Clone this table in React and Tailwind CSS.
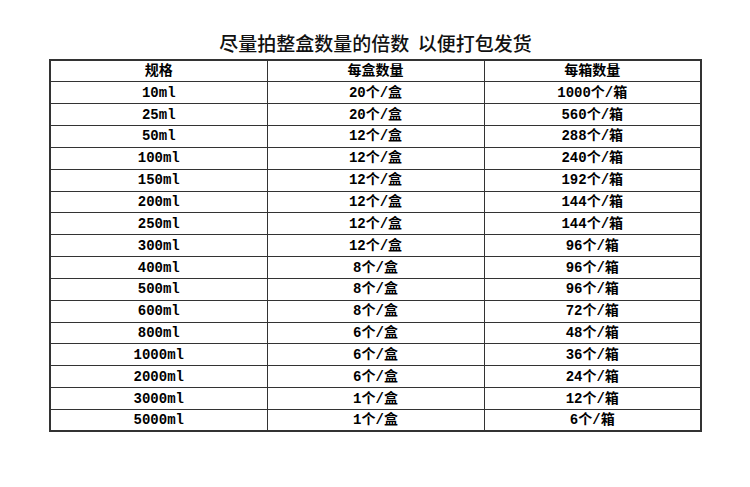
import React from 'react';

const rows = [
  ['10ml', '20个/盒', '1000个/箱'],
  ['25ml', '20个/盒', '560个/箱'],
  ['50ml', '12个/盒', '288个/箱'],
  ['100ml', '12个/盒', '240个/箱'],
  ['150ml', '12个/盒', '192个/箱'],
  ['200ml', '12个/盒', '144个/箱'],
  ['250ml', '12个/盒', '144个/箱'],
  ['300ml', '12个/盒', '96个/箱'],
  ['400ml', '8个/盒', '96个/箱'],
  ['500ml', '8个/盒', '96个/箱'],
  ['600ml', '8个/盒', '72个/箱'],
  ['800ml', '6个/盒', '48个/箱'],
  ['1000ml', '6个/盒', '36个/箱'],
  ['2000ml', '6个/盒', '24个/箱'],
  ['3000ml', '1个/盒', '12个/箱'],
  ['5000ml', '1个/盒', '6个/箱'],
];

const cell = 'border border-[#333] text-center align-middle p-0 w-1/3 leading-none';

export default function App() {
  return (
    <div className="w-[750px] h-[487px] bg-white pt-[32px] px-[49px]">
      <h1 className="text-center text-[19px] leading-[22px] text-[#111] font-['Noto_Sans_CJK_SC',sans-serif] font-medium pl-[1px]">
        尽量拍整盒数量的倍数&nbsp;&nbsp;以便打包发货
      </h1>
      <table className="mt-[5px] w-[653px] border-collapse border-2 border-[#333] table-fixed font-['Liberation_Mono','Noto_Sans_CJK_SC',monospace] text-[14px] font-bold text-black">
        <thead>
          <tr className="h-[21.85px]">
            <th className={cell}>规格</th>
            <th className={cell}>每盒数量</th>
            <th className={cell}>每箱数量</th>
          </tr>
        </thead>
        <tbody>
          {rows.map((r) => (
            <tr key={r[0]} className="h-[21.85px]">
              <td className={cell}>{r[0]}</td>
              <td className={cell}>{r[1]}</td>
              <td className={cell}>{r[2]}</td>
            </tr>
          ))}
        </tbody>
      </table>
    </div>
  );
}
